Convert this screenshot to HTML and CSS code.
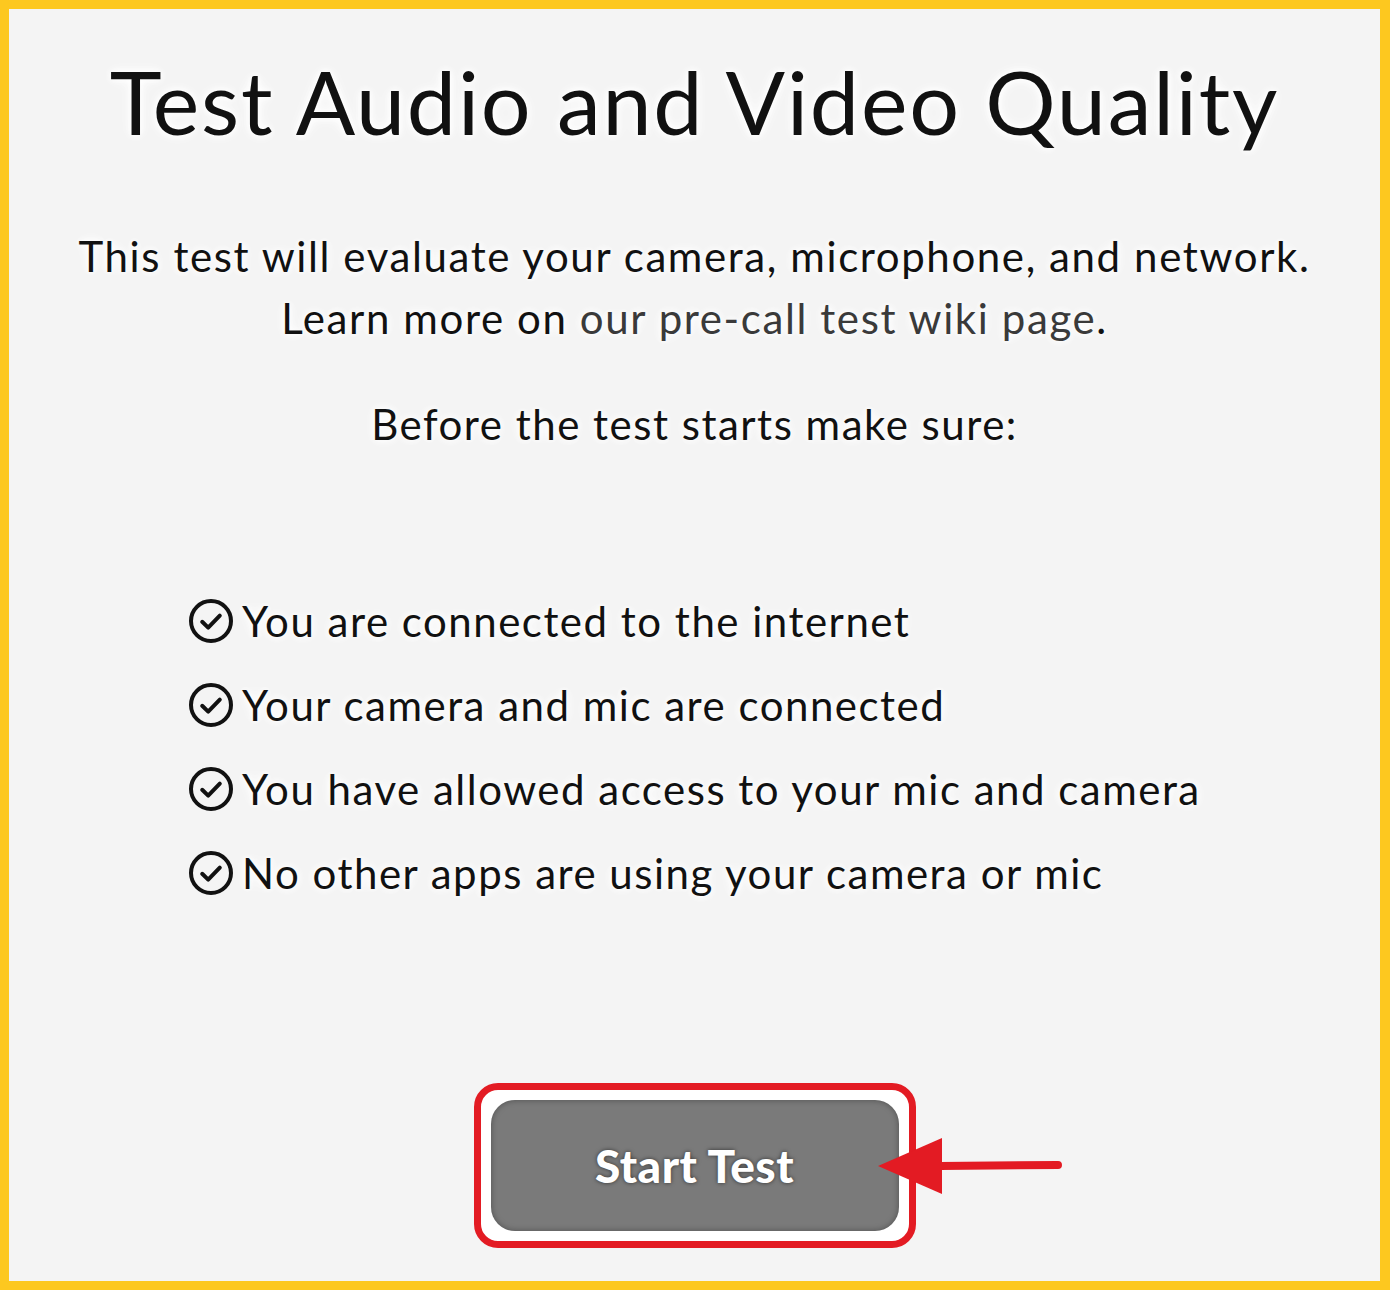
FILE: index.html
```html
<!DOCTYPE html>
<html lang="en">
<head>
    <meta charset="UTF-8">
    <meta name="viewport" content="width=device-width, initial-scale=1.0">
    <title>Pre-call Test</title>
    <link rel="stylesheet" href="styles.css">
</head>
<body>
    <div class="keret">
        <h1 class="cim">Test Audio and Video Quality</h1>
        <p class="leiras">
            This test will evaluate your camera, microphone, and network.<br>
            Learn more on <a href="#" class="wiki-link">our pre-call test wiki page</a>.
        </p>
        <p class="elotte">Before the test starts make sure:</p>

        <ul class="lista">
            <li><svg class="pipa" viewBox="0 0 24 24"><circle cx="12" cy="12" r="10"/><path d="M7.6 12.4l3 2.9 5.8-6"/></svg>You are connected to the internet</li>
            <li><svg class="pipa" viewBox="0 0 24 24"><circle cx="12" cy="12" r="10"/><path d="M7.6 12.4l3 2.9 5.8-6"/></svg>Your camera and mic are connected</li>
            <li><svg class="pipa" viewBox="0 0 24 24"><circle cx="12" cy="12" r="10"/><path d="M7.6 12.4l3 2.9 5.8-6"/></svg>You have allowed access to your mic and camera</li>
            <li><svg class="pipa" viewBox="0 0 24 24"><circle cx="12" cy="12" r="10"/><path d="M7.6 12.4l3 2.9 5.8-6"/></svg>No other apps are using your camera or mic</li>
        </ul>

        <div class="gomb-sor">
            <div class="kiemeles">
                <button class="start-gomb">Start Test</button>
            </div>
            <svg class="nyil" viewBox="0 0 190 70">
                <line x1="64" y1="35" x2="182" y2="34" />
                <polygon points="2,35 66,7 66,63" />
            </svg>
        </div>
    </div>
</body>
</html>
```

FILE: styles.css
```css
html, body {
    margin: 0;
    padding: 0;
}
body {
    font-family: Lato, "Noto Sans", sans-serif;
    color: #111;
}
.keret {
    box-sizing: border-box;
    width: 1390px;
    height: 1290px;
    border: 9px solid #fdc81f;
    border-right-width: 10px;
    background: #f4f4f4;
    display: flex;
    flex-direction: column;
    align-items: center;
    text-shadow: 0 0 6px #fff, 0 0 10px #fff, 0 0 14px #fff;
}
.cim {
    font-size: 88px;
    font-weight: 400;
    margin: 40px 0 0;
    line-height: 1.2;
    letter-spacing: 1.8px;
}
.leiras {
    font-size: 42px;
    text-align: center;
    line-height: 62px;
    letter-spacing: 1.6px;
    margin: 70px 0 0;
}
.wiki-link {
    color: #3a3a3a;
    text-decoration: none;
}
.elotte {
    font-size: 42px;
    margin: 44px 0 0;
    line-height: 62px;
    letter-spacing: 1.5px;
}
.lista {
    list-style: none;
    align-self: flex-start;
    margin: 124px 0 0 178px;
    padding: 0;
}
.lista li {
    display: flex;
    align-items: center;
    font-size: 42px;
    letter-spacing: 1.5px;
    height: 84px;
}
.pipa {
    width: 48px;
    height: 48px;
    margin-right: 7px;
    fill: none;
    stroke: #111;
    stroke-width: 2;
    stroke-linecap: round;
    stroke-linejoin: round;
}
.gomb-sor {
    position: relative;
    margin-top: 168px;
}
.kiemeles {
    border: 7px solid #e31b23;
    border-radius: 24px;
    background: #fff;
    padding: 10px;
}
.start-gomb {
    display: block;
    width: 408px;
    height: 131px;
    border: none;
    border-radius: 24px;
    background: #7a7a7a;
    box-shadow: inset 0 0 6px rgba(0, 0, 0, 0.35);
    color: #fff;
    font-family: Lato, "Noto Sans", sans-serif;
    font-weight: 900;
    font-size: 46px;
    letter-spacing: 0.5px;
    text-shadow: 0 0 4px rgba(0, 0, 0, 0.6);
    cursor: pointer;
}
.nyil {
    position: absolute;
    left: 402px;
    top: 48px;
    width: 190px;
    height: 70px;
}
.nyil line {
    stroke: #e31b23;
    stroke-width: 8;
    stroke-linecap: round;
}
.nyil polygon {
    fill: #e31b23;
}
```
